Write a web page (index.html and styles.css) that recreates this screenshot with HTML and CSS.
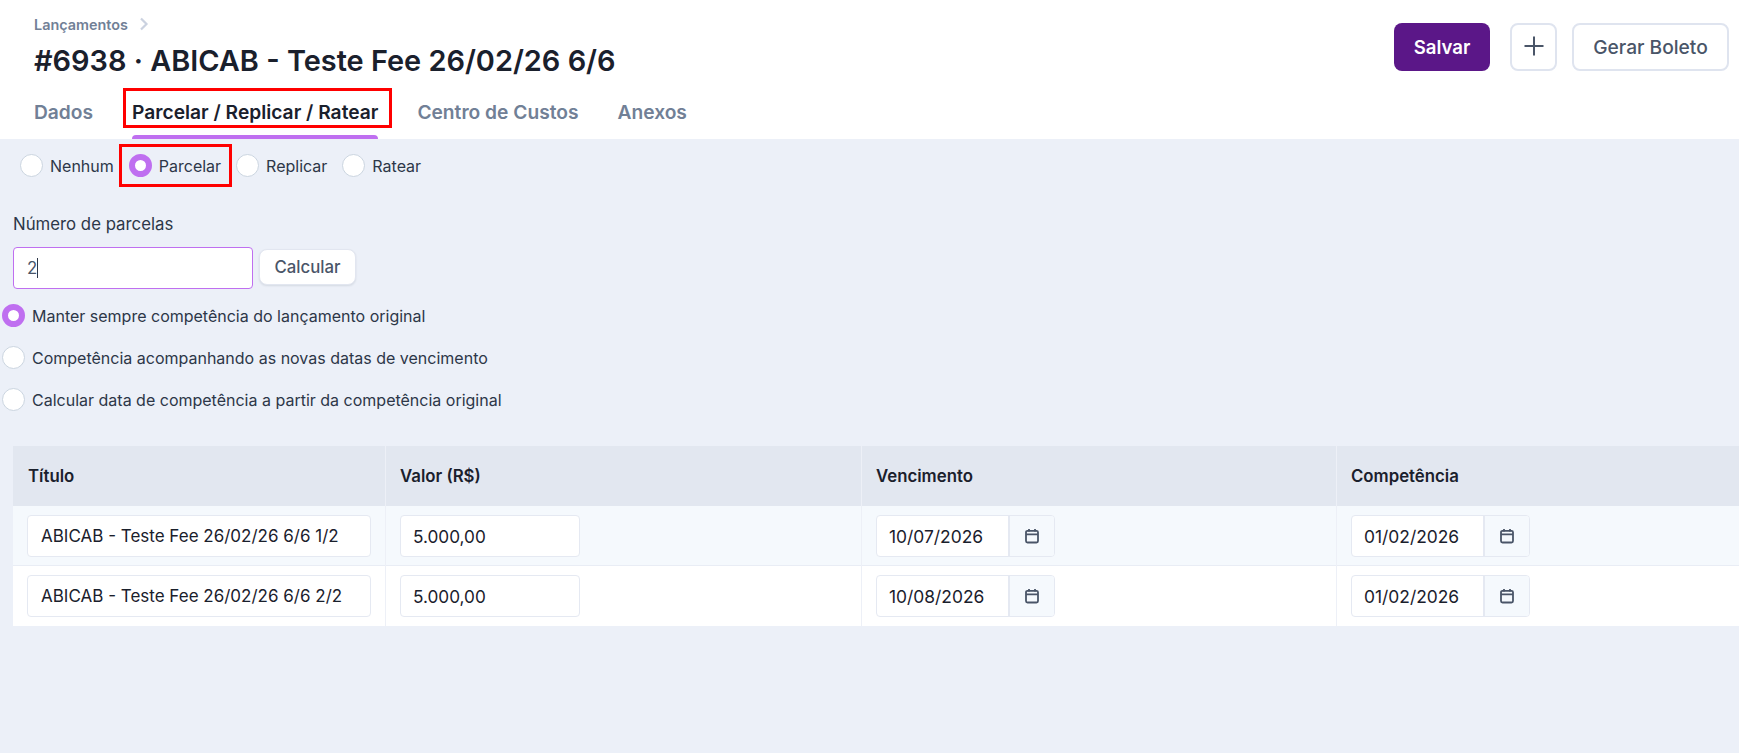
FILE: index.html
```html
<!DOCTYPE html>
<html lang="pt-BR">
<head>
<meta charset="utf-8">
<title>Lançamentos</title>
<link rel="stylesheet" href="styles.css">
</head>
<body>
<header class="top">
  <div class="top-row">
    <div class="heading">
      <div class="crumb"><span>Lançamentos</span>
        <svg class="chev" viewBox="0 0 10 14" width="10" height="14"><path d="M2 1.5l5.5 5.5-5.5 5.5" fill="none" stroke="#cbd2e0" stroke-width="2.2"/></svg>
      </div>
      <h1>#6938 · ABICAB - Teste Fee 26/02/26 6/6</h1>
    </div>
    <div class="actions">
      <button class="btn btn-primary">Salvar</button>
      <button class="btn btn-icon" aria-label="Adicionar">
        <svg class="plus" viewBox="0 0 20 20" width="20" height="20"><path d="M10 0.5v19M0.5 10h19" fill="none" stroke="#4a5568" stroke-width="2"/></svg>
      </button>
      <button class="btn btn-light">Gerar Boleto</button>
    </div>
  </div>
  <nav class="tabs">
    <a class="tab">Dados</a>
    <a class="tab tab-active">Parcelar / Replicar / Ratear<i class="mark"></i></a>
    <a class="tab">Centro de Custos</a>
    <a class="tab">Anexos</a>
  </nav>
</header>
<main class="panel">
  <div class="modes">
    <label class="radio"><i class="dot"></i>Nenhum</label>
    <label class="radio"><i class="dot dot-on"></i>Parcelar<i class="mark"></i></label>
    <label class="radio"><i class="dot"></i>Replicar</label>
    <label class="radio"><i class="dot"></i>Ratear</label>
  </div>
  <div class="field-label">Número de parcelas</div>
  <div class="calc">
    <div class="count"><span>2</span><i class="caret"></i></div>
    <button class="btn-calc">Calcular</button>
  </div>
  <div class="options">
    <label class="radio"><i class="dot dot-on"></i>Manter sempre competência do lançamento original</label>
    <label class="radio"><i class="dot"></i>Competência acompanhando as novas datas de vencimento</label>
    <label class="radio"><i class="dot"></i>Calcular data de competência a partir da competência original</label>
  </div>
  <div class="table">
    <div class="row row-head">
      <div class="cell">Título</div>
      <div class="cell">Valor (R$)</div>
      <div class="cell">Vencimento</div>
      <div class="cell">Competência</div>
    </div>
    <div class="row row-alt">
      <div class="cell"><div class="input input-title">ABICAB - Teste Fee 26/02/26 6/6 1/2</div></div>
      <div class="cell"><div class="input input-value">5.000,00</div></div>
      <div class="cell"><div class="date"><div class="date-text">10/07/2026</div><div class="date-btn"><svg class="cal" viewBox="0 0 16 16" width="16" height="16"><use href="#cal"/></svg></div></div></div>
      <div class="cell"><div class="date"><div class="date-text">01/02/2026</div><div class="date-btn"><svg class="cal" viewBox="0 0 16 16" width="16" height="16"><use href="#cal"/></svg></div></div></div>
    </div>
    <div class="row">
      <div class="cell"><div class="input input-title">ABICAB - Teste Fee 26/02/26 6/6 2/2</div></div>
      <div class="cell"><div class="input input-value">5.000,00</div></div>
      <div class="cell"><div class="date"><div class="date-text">10/08/2026</div><div class="date-btn"><svg class="cal" viewBox="0 0 16 16" width="16" height="16"><use href="#cal"/></svg></div></div></div>
      <div class="cell"><div class="date"><div class="date-text">01/02/2026</div><div class="date-btn"><svg class="cal" viewBox="0 0 16 16" width="16" height="16"><use href="#cal"/></svg></div></div></div>
    </div>
  </div>
</main>
<svg class="defs" width="0" height="0"><defs>
  <g id="cal" fill="none" stroke="#4a5568" stroke-width="1.8"><rect x="2" y="2.8" width="12" height="11.7" rx="1.5"/><path d="M2 6.3h12M5 1v2.5M11 1v2.5"/></g>
</defs></svg>
</body>
</html>
```
FILE: styles.css
```css
* { box-sizing: border-box; }
html, body { margin: 0; height: 100%; }
body { font-family: Inter, "Liberation Sans", sans-serif; color: #1a202c; background: #ecf0f8; overflow: hidden; display: flex; flex-direction: column; }
.defs { position: absolute; }
.top { background: #fff; height: 139px; padding: 15px 10px 0 34px; flex: none; }
.top-row { display: flex; justify-content: space-between; align-items: flex-start; }
.crumb { display: flex; align-items: center; gap: 11px; font-size: 14.4px; font-weight: 600; color: #718096; height: 18px; }
h1 { margin: 10px 0 0; font-size: 28.9px; line-height: 36px; font-weight: 600; color: #1a202c; }
.actions { display: flex; gap: 15px; padding-top: 8px; }
.btn { height: 48px; border-radius: 8px; font: 500 19.2px Inter, sans-serif; cursor: pointer; }
.btn-primary { width: 96px; background: #5b1788; color: #fff; border: 0; font-weight: 600; font-size: 18.6px; margin-right: 5px; }
.btn-icon { width: 47px; background: #fff; border: 2px solid #dfe4ef; padding: 0 0 3px; display: flex; align-items: center; justify-content: center; }
.btn-light { width: 157px; background: #fff; border: 2px solid #dfe4ef; color: #4a5568; }
.tabs { display: flex; gap: 39px; margin-top: 13px; }
.tab { position: relative; font-size: 19.2px; font-weight: 600; color: #718096; height: 43px; padding-top: 8px; line-height: 24px; }
.tab-active { color: #1a202c; }
.tab-active::after { content: ""; position: absolute; left: 0; right: 0; bottom: -4px; height: 4px; border-radius: 4px 4px 0 0; background: #bf6ff0; }
.mark { position: absolute; border: 3px solid #f00; pointer-events: none; }
.tab .mark { left: -9px; right: -14px; top: -4px; bottom: 7px; }
.panel { flex: 1; padding: 0 0 0 13px; }
.radio { position: relative; display: flex; align-items: center; gap: 7px; font-size: 16px; color: #2d3748; }
.dot { width: 23px; height: 23px; border-radius: 50%; background: #fff; border: 1px solid #cbd5e0; flex: none; }
.dot-on { background: #fff; border: 6.5px solid #bf6ff0; }
.modes { display: flex; gap: 15px; padding: 15px 0 0 7px; height: 38px; }
.modes .mark { left: -10px; right: -11px; top: -10px; bottom: -10px; }
.modes .radio { height: 23px; }
.field-label { margin-top: 37px; font-size: 16.8px; line-height: 20px; color: #2d3748; }
.calc { display: flex; align-items: flex-start; gap: 6px; margin-top: 13px; }
.count { width: 240px; height: 42px; background: #fff; border: 1px solid #bf6ff0; border-radius: 4px; padding-left: 13px; display: flex; align-items: center; font-size: 16.8px; color: #4a5568; }
.caret { width: 1px; height: 20px; background: #2d3748; }
.btn-calc { width: 97px; height: 36px; margin-top: 2px; background: #fff; border: 1px solid #e2e6f0; border-radius: 8px; font: 500 16.8px Inter, sans-serif; color: #4a5568; box-shadow: 0 1px 2px rgba(45,55,72,.12); }
.options { display: flex; flex-direction: column; gap: 19px; margin: 15px 0 0 -11px; }
.table { margin-top: 35px; width: 1726px; }
.row { display: grid; grid-template-columns: 372px 476px 475px 1fr; background: #fff; height: 60px; }
.row-head { background: #e2e7f0; font-size: 16.8px; font-weight: 600; color: #1a202c; }
.row-alt { background: #f5f9fd; box-shadow: inset 0 -1px 0 #e9edf5; }
.cell { display: flex; align-items: center; padding-left: 14px; border-left: 1px solid #edf0f7; }
.cell:first-child { border-left: 0; padding-left: 15px; }
.input { height: 42px; background: #fff; border: 1px solid #e5e9f2; border-radius: 4px; display: flex; align-items: center; padding-left: 12px; font-size: 17px; color: #1a202c; }
.input-title { width: 344px; margin-left: -1px; padding-left: 13px; }
.input-value { width: 180px; font-size: 17.2px; }
.date { display: flex; width: 179px; height: 42px; background: #fff; border: 1px solid #e5e9f2; border-radius: 4px; overflow: hidden; }
.date-text { width: 131px; display: flex; align-items: center; padding-left: 12px; font-size: 17.4px; color: #1a202c; }
.date-btn { flex: 1; display: flex; align-items: center; justify-content: center; background: #f5f9fd; border-left: 2px solid #e5e9f2; }
```
